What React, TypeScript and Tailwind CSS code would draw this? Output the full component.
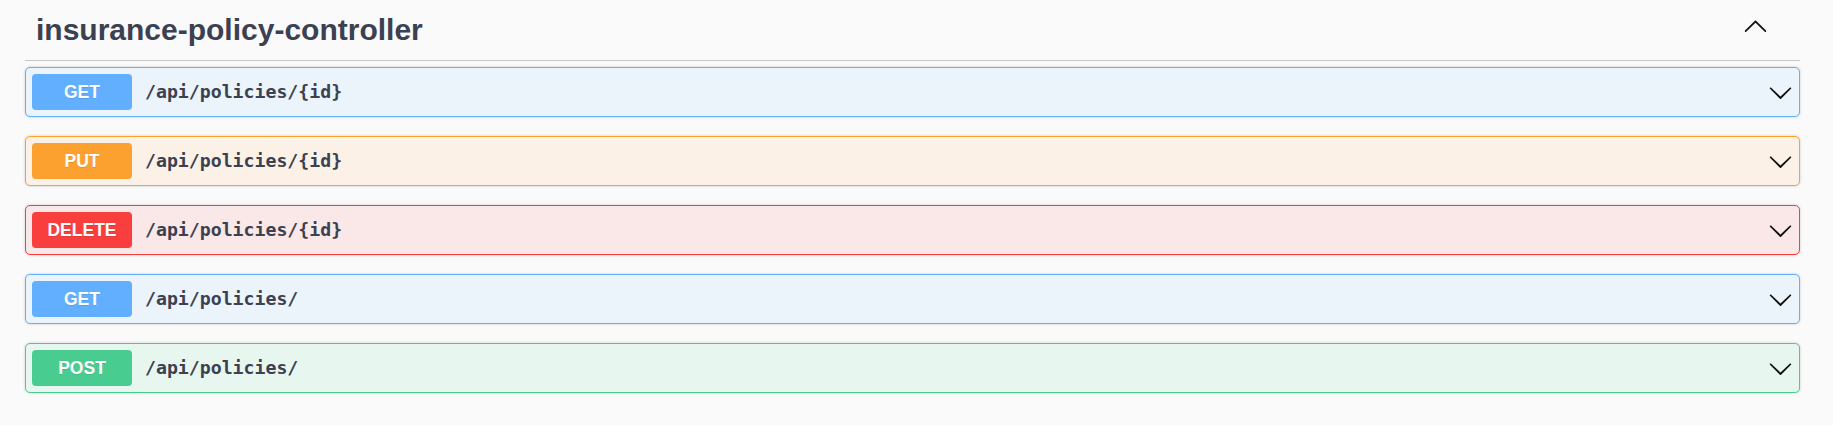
const ops = [
  { method: "GET", path: "/api/policies/{id}", badge: "bg-[#61affe]", border: "border-[#61affe]", bg: "bg-[#ebf3fb]" },
  { method: "PUT", path: "/api/policies/{id}", badge: "bg-[#fca130]", border: "border-[#fca130]", bg: "bg-[#fbf1e6]" },
  { method: "DELETE", path: "/api/policies/{id}", badge: "bg-[#f93e3e]", border: "border-[#f93e3e]", bg: "bg-[#fae7e7]" },
  { method: "GET", path: "/api/policies/", badge: "bg-[#61affe]", border: "border-[#61affe]", bg: "bg-[#ebf3fb]" },
  { method: "POST", path: "/api/policies/", badge: "bg-[#49cc90]", border: "border-[#49cc90]", bg: "bg-[#e8f6f0]" },
];

function ArrowDown() {
  return (
    <svg width="25" height="25" viewBox="0 0 20 20" className="shrink-0">
      <path
        fill="#111"
        d="M17.418 6.109c.272-.268.709-.268.979 0s.271.701 0 .969l-7.908 7.83c-.27.268-.707.268-.979 0l-7.908-7.83c-.27-.268-.27-.701 0-.969.271-.268.709-.268.979 0L10 13.25l7.418-7.141z"
      />
    </svg>
  );
}

function ArrowUp() {
  return (
    <svg width="25" height="25" viewBox="0 0 20 20" className="shrink-0">
      <path
        fill="#111"
        d="M17.418 14.908c.272.268.709.268.979 0s.271-.701 0-.969l-7.908-7.83c-.27-.268-.707-.268-.979 0l-7.908 7.83c-.27.268-.27.701 0 .969.271.268.709.268.979 0L10 7.767l7.418 7.141z"
      />
    </svg>
  );
}

export default function App() {
  return (
    <div className="min-h-screen bg-[#fafafa] pl-[25px] pr-[33px] font-['Liberation_Sans',Arial,sans-serif]">
      <div className="flex h-[61px] items-center border-b border-[#c6c7cb]">
        <h3 className="mb-[2px] flex-1 pl-[11px] text-[30px] font-bold leading-normal text-[#3b4151]">
          insurance-policy-controller
        </h3>
        <div className="mb-[10px] mr-[32px]">
          <ArrowUp />
        </div>
      </div>
      <div className="mt-[6px] flex flex-col gap-[19px]">
        {ops.map((op, idx) => (
          <div
            key={idx}
            className={`flex h-[50px] items-center rounded-[5px] border p-[6px] shadow-[0_0_3px_rgba(0,0,0,0.19)] ${op.border} ${op.bg}`}
          >
            <span
              className={`flex h-[36px] w-[100px] items-center justify-center rounded-[4px] text-[17.5px] font-bold text-white [text-shadow:0_1px_0_rgba(0,0,0,0.1)] ${op.badge}`}
            >
              {op.method}
            </span>
            <span className="ml-[13px] flex-1 font-['DejaVu_Sans_Mono',monospace] text-[18.2px] font-bold text-[#3b4151]">
              {op.path}
            </span>
            <ArrowDown />
          </div>
        ))}
      </div>
    </div>
  );
}
